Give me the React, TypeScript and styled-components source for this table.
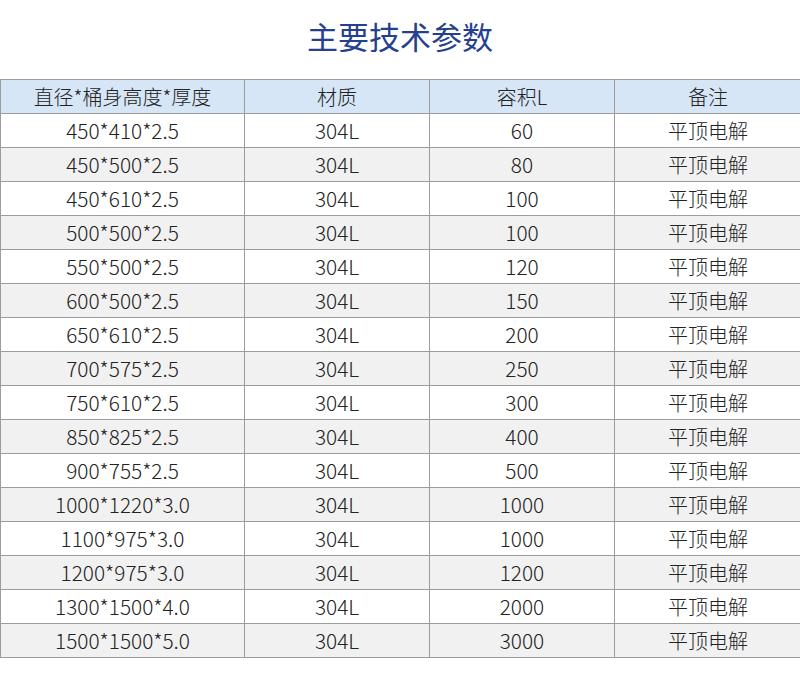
import React from "react";
import styled, { createGlobalStyle } from "styled-components";

const Global = createGlobalStyle`
  html, body { margin: 0; padding: 0; background: #ffffff; }
  body { font-family: "Noto Sans CJK SC", "Noto Sans", sans-serif; }
`;

const Page = styled.div`
  width: 800px;
  overflow: hidden;
`;

const Title = styled.h1`
  margin: 0;
  height: 79px;
  display: flex;
  align-items: center;
  justify-content: center;
  padding-bottom: 8px;
  box-sizing: border-box;
  font-size: 31px;
  font-weight: 400;
  color: #24408f;
`;

const Table = styled.table`
  width: 801px;
  border-collapse: collapse;
  table-layout: fixed;
  font-size: 20px;
  font-weight: 300;
  color: #222;
`;

const Row = styled.tr<{ $alt?: boolean; $head?: boolean }>`
  height: 34px;
  background: ${(p) => (p.$head ? "#d6e6f7" : p.$alt ? "#f1f1f1" : "#ffffff")};
`;

const Cell = styled.td<{ $num?: boolean }>`
  border: 1px solid #9c9c9c;
  text-align: center;
  padding: 0;
  line-height: 33px;
  height: 33px;
  white-space: nowrap;
  font-size: ${(p) => (p.$num ? "20.8px" : "20px")};
`;

const HeadCell = styled(Cell).attrs({ as: "th" })`
  font-weight: 300;
`;

const rows: [string, string, string][] = [
  ["450*410*2.5", "304L", "60"],
  ["450*500*2.5", "304L", "80"],
  ["450*610*2.5", "304L", "100"],
  ["500*500*2.5", "304L", "100"],
  ["550*500*2.5", "304L", "120"],
  ["600*500*2.5", "304L", "150"],
  ["650*610*2.5", "304L", "200"],
  ["700*575*2.5", "304L", "250"],
  ["750*610*2.5", "304L", "300"],
  ["850*825*2.5", "304L", "400"],
  ["900*755*2.5", "304L", "500"],
  ["1000*1220*3.0", "304L", "1000"],
  ["1100*975*3.0", "304L", "1000"],
  ["1200*975*3.0", "304L", "1200"],
  ["1300*1500*4.0", "304L", "2000"],
  ["1500*1500*5.0", "304L", "3000"],
];

export default function App() {
  return (
    <Page>
      <Global />
      <Title>主要技术参数</Title>
      <Table>
        <colgroup>
          <col style={{ width: 244 }} />
          <col style={{ width: 185 }} />
          <col style={{ width: 185 }} />
          <col style={{ width: 187 }} />
        </colgroup>
        <thead>
          <Row $head>
            <HeadCell>直径*桶身高度*厚度</HeadCell>
            <HeadCell>材质</HeadCell>
            <HeadCell>容积L</HeadCell>
            <HeadCell>备注</HeadCell>
          </Row>
        </thead>
        <tbody>
          {rows.map((r, i) => (
            <Row key={i} $alt={i % 2 === 1}>
              <Cell $num>{r[0]}</Cell>
              <Cell $num>{r[1]}</Cell>
              <Cell $num>{r[2]}</Cell>
              <Cell>平顶电解</Cell>
            </Row>
          ))}
        </tbody>
      </Table>
    </Page>
  );
}
